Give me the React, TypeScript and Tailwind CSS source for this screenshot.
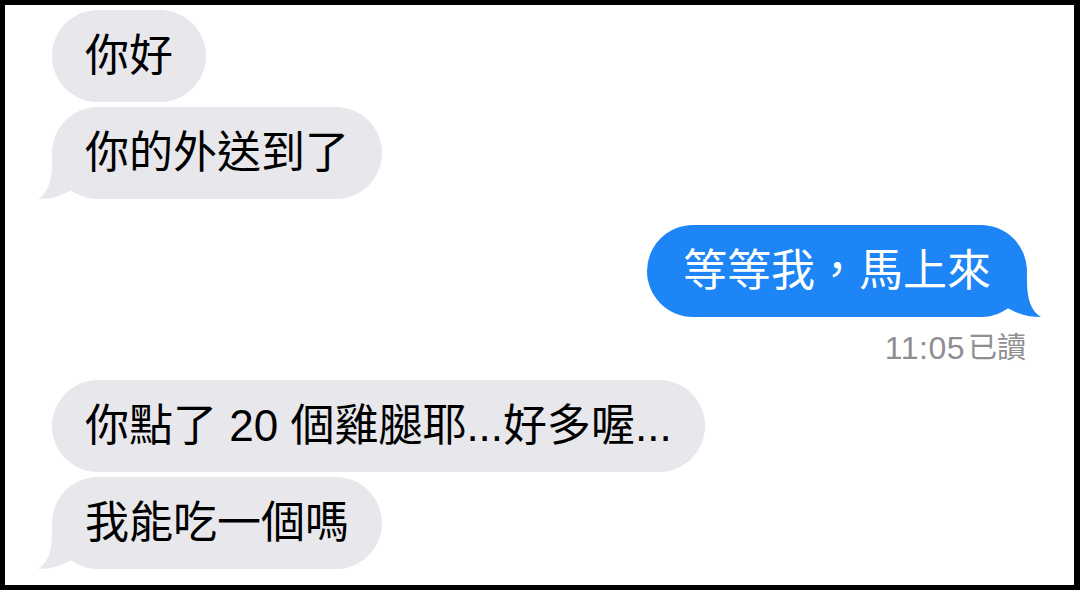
import React from "react";

const FONT = '"Liberation Sans", "Noto Sans CJK TC", sans-serif';

function Tail({ color, side }: { color: string; side: "left" | "right" }) {
  return (
    <svg
      width="50"
      height="50"
      viewBox="0 0 50 50"
      className={
        side === "left"
          ? "absolute left-[-14px] bottom-0"
          : "absolute right-[-14px] bottom-0 -scale-x-100"
      }
    >
      <path
        d="M14.5,0 L14,14 C14,32 10,44 0,50 C12,50 24,47 35,40 L50,30 L50,0 Z"
        fill={color}
      />
    </svg>
  );
}

function Received({ text, tail }: { text: string; tail?: boolean }) {
  return (
    <div className="flex">
      <div className="relative flex h-[92px] items-center rounded-[46px] bg-[#e7e7ec] px-[33px]">
        {tail && <Tail color="#e7e7ec" side="left" />}
        <span className="relative text-[44px] leading-none text-black whitespace-pre">
          {text}
        </span>
      </div>
    </div>
  );
}

export default function App() {
  return (
    <div
      className="box-border h-[590px] w-[1080px] overflow-hidden border-[5px] border-r-[6px] border-black bg-white"
      style={{ fontFamily: FONT }}
    >
      <div className="flex flex-col px-[47px] pt-[5px]">
        <Received text="你好" />
        <div className="mt-[5px]">
          <Received text="你的外送到了" tail />
        </div>
        <div className="mt-[26px] flex justify-end">
          <div className="relative flex h-[92px] items-center rounded-[46px] bg-[#1d85f6] px-[36px]">
            <Tail color="#1d85f6" side="right" />
            <span className="relative text-[44px] leading-none text-white">
              等等我，馬上來
            </span>
          </div>
        </div>
        <div className="mt-[15px] flex h-[32px] items-center justify-end pr-[1px] text-[32px] leading-[32px] text-[#8e8e93]">
          <span className="tracking-[0.5px]">11:05</span>
          <span className="ml-[3px] text-[29px]">已讀</span>
        </div>
        <div className="mt-[16px]">
          <Received text="你點了 20 個雞腿耶...好多喔..." />
        </div>
        <div className="mt-[5px]">
          <Received text="我能吃一個嗎" tail />
        </div>
      </div>
    </div>
  );
}
